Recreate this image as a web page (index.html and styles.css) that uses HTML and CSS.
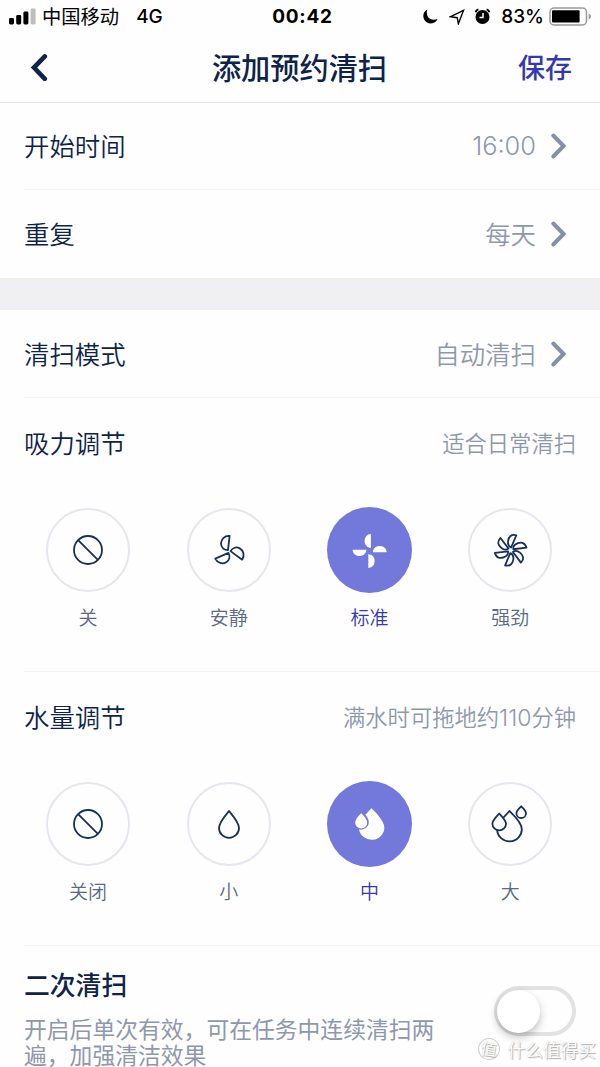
FILE: index.html
```html
<!DOCTYPE html>
<html lang="zh-CN">
<head>
    <meta charset="UTF-8">
    <meta name="viewport" content="width=device-width, initial-scale=1.0">
    <title>添加预约清扫</title>
    <link rel="stylesheet" href="styles.css">
</head>
<body>

    <div class="status-bar">
        <div class="status-left">
            <svg class="signal" width="27" height="17" viewBox="0 0 27 17">
                <rect x="0" y="10" width="5" height="6.5" rx="1.4"/>
                <rect x="7.2" y="7" width="5" height="9.5" rx="1.4"/>
                <rect x="14.4" y="3.5" width="5" height="13" rx="1.4"/>
                <rect class="off" x="21.6" y="0.5" width="5" height="16" rx="1.4"/>
            </svg>
            <span class="carrier">中国移动</span>
            <span class="network">4G</span>
        </div>
        <div class="clock">00:42</div>
        <div class="status-right">
            <svg width="15" height="15" viewBox="0 0 15 15">
                <path d="M4.3 .6C-1.2 3.4 -.6 10.6 3.6 13.2C7.8 15.8 13 14 14.6 10C10 11.8 6 10.2 4.6 7.2C3.6 5 3.6 2.6 4.3 .6Z"/>
            </svg>
            <svg class="location" width="16" height="16" viewBox="0 0 16 16">
                <path d="M1.2 7.8L14.5 1.4L9.4 14.7L8.2 8.7Z"/>
            </svg>
            <svg class="alarm" width="17" height="17" viewBox="0 0 17 17">
                <circle cx="8.5" cy="9" r="7"/>
                <path class="ear" d="M1.6 4.2Q2.2 2.1 4.4 1.4M15.4 4.2Q14.8 2.1 12.6 1.4"/>
                <path class="hand" d="M9 5V9.4H5.5"/>
            </svg>
            <span class="percent">83%</span>
            <svg class="battery" width="43" height="19" viewBox="0 0 43 19">
                <rect class="shell" x="1" y="1" width="36.5" height="17" rx="4"/>
                <rect x="3" y="3.2" width="27.6" height="12.4" rx="1"/>
                <path class="tip" d="M39.7 6.7Q42 7.3 42 9.5T39.7 12.3Z"/>
            </svg>
        </div>
    </div>

    <header class="nav">
        <a class="back">
            <svg width="18" height="28" viewBox="0 0 18 28"><path d="M14.8 3.4L4 14.6L14.8 25.8"/></svg>
        </a>
        <h1>添加预约清扫</h1>
        <a class="save">保存</a>
    </header>

    <div class="row line">
        <span class="label">开始时间</span>
        <span class="value time">16:00</span>
        <svg class="arrow" width="18" height="28" viewBox="0 0 18 28"><path d="M3.3 3.5L13.6 14L3.3 24.5"/></svg>
    </div>
    <div class="row">
        <span class="label">重复</span>
        <span class="value">每天</span>
        <svg class="arrow" width="18" height="28" viewBox="0 0 18 28"><path d="M3.3 3.5L13.6 14L3.3 24.5"/></svg>
    </div>

    <div class="gap"></div>

    <div class="row line">
        <span class="label">清扫模式</span>
        <span class="value">自动清扫</span>
        <svg class="arrow" width="18" height="28" viewBox="0 0 18 28"><path d="M3.3 3.5L13.6 14L3.3 24.5"/></svg>
    </div>

    <section class="panel line">
        <div class="panel-head">
            <span class="label">吸力调节</span>
            <span class="hint">适合日常清扫</span>
        </div>
        <div class="options">
            <div class="option">
                <div class="circle">
                    <svg width="40" height="40" viewBox="-20 -20 40 40"><circle r="14"/><path d="M-9.9 -9.9L9.9 9.9"/></svg>
                </div>
                <span>关</span>
            </div>
            <div class="option">
                <div class="circle">
                    <svg width="40" height="40" viewBox="-20 -20 40 40">
                        <defs><path id="blade3" d="M-1 -1.2L.6 -15.5C-4.6 -15.9 -8 -12 -8 -7.8C-8 -4 -5 -1.2 -1 -1.2Z"/></defs>
                        <g transform="translate(0 1.4)">
                            <use href="#blade3"/>
                            <use href="#blade3" transform="rotate(120)"/>
                            <use href="#blade3" transform="rotate(240)"/>
                        </g>
                    </svg>
                </div>
                <span>安静</span>
            </div>
            <div class="option selected">
                <div class="circle">
                    <svg width="40" height="40" viewBox="-20 -20 40 40">
                        <defs><path id="blade4" d="M1.3 -17V-3.3C-2.4 -3.3 -5 -6.2 -5 -10.1C-5 -14 -2.4 -17 1.3 -17Z"/></defs>
                        <g transform="translate(.6 1)">
                            <use href="#blade4"/>
                            <use href="#blade4" transform="rotate(90)"/>
                            <use href="#blade4" transform="rotate(180)"/>
                            <use href="#blade4" transform="rotate(270)"/>
                        </g>
                    </svg>
                </div>
                <span>标准</span>
            </div>
            <div class="option">
                <div class="circle">
                    <svg width="40" height="40" viewBox="-20 -20 40 40">
                        <defs><path id="blade6" d="M.4 -2.8L5.6 -15C.6 -16.4 -2 -13.5 -2.6 -9.2C-3 -6.2 -1.8 -3.6 .4 -2.8Z"/></defs>
                        <g transform="translate(.7 .3)">
                            <use href="#blade6"/>
                            <use href="#blade6" transform="rotate(60)"/>
                            <use href="#blade6" transform="rotate(120)"/>
                            <use href="#blade6" transform="rotate(180)"/>
                            <use href="#blade6" transform="rotate(240)"/>
                            <use href="#blade6" transform="rotate(300)"/>
                        </g>
                    </svg>
                </div>
                <span>强劲</span>
            </div>
        </div>
    </section>

    <section class="panel line">
        <div class="panel-head">
            <span class="label">水量调节</span>
            <span class="hint">满水时可拖地约<span class="minutes">110</span>分钟</span>
        </div>
        <div class="options">
            <div class="option">
                <div class="circle">
                    <svg width="40" height="40" viewBox="-20 -20 40 40"><circle r="14"/><path d="M-9.9 -9.9L9.9 9.9"/></svg>
                </div>
                <span>关闭</span>
            </div>
            <div class="option">
                <div class="circle">
                    <svg width="40" height="40" viewBox="-20 -20 40 40"><path d="M0 -13C-2.8 -9.6 -10 -1.6 -10 4A10 9.8 0 0 0 10 4C10 -1.6 2.8 -9.6 0 -13Z"/></svg>
                </div>
                <span>小</span>
            </div>
            <div class="option selected">
                <div class="circle">
                    <svg width="40" height="40" viewBox="-20 -20 40 40">
                        <path d="M2.5 -15.8C6 -12.4 15.4 -3.3 15.4 3.8A12.8 12.2 0 0 1 -10 5.6C-4 6.4 -.2 2.4 -.2 -2C-.2 -4.6 -1.8 -7.1 -3.6 -9.3Z"/>
                        <path d="M-7.8 -10.8C-6 -8.9 -1.8 -4.9 -1.8 -1.6A6 6 0 0 1 -13.8 -1.6C-13.8 -4.9 -9.6 -8.9 -7.8 -10.8Z"/>
                    </svg>
                </div>
                <span>中</span>
            </div>
            <div class="option">
                <div class="circle">
                    <svg width="40" height="40" viewBox="-20 -20 40 40">
                        <path d="M-6.6 -6.3L-.5 -13C3 -9.5 11.8 -1.6 11.8 5.2A12.3 11.8 0 0 1 -12.8 5.9"/>
                        <path d="M-10.8 -10.5C-8.8 -8.2 -4 -3.8 -4 -.2A6.8 6.6 0 0 1 -17.6 -.2C-17.6 -3.8 -12.8 -8.2 -10.8 -10.5Z"/>
                        <path d="M11.2 -17.8C12.5 -16.2 16 -13.5 16 -10.8A4.8 4.8 0 0 1 6.4 -10.8C6.4 -13.5 9.9 -16.2 11.2 -17.8Z"/>
                    </svg>
                </div>
                <span>大</span>
            </div>
        </div>
    </section>

    <section class="twice">
        <div class="twice-text">
            <h2>二次清扫</h2>
            <p>开启后单次有效，可在任务中连续清扫两遍，加强清洁效果</p>
        </div>
        <div class="switch"><div class="knob"></div></div>
        <div class="watermark"><span class="badge">值</span>什么值得买</div>
    </section>

</body>
</html>
```
FILE: styles.css
```css
* {
    box-sizing: border-box;
}
body {
    margin: 0;
    width: 600px;
    height: 1067px;
    overflow: hidden;
    background-color: #fefefe;
    color: #0d234a;
    font-family: "Noto Sans CJK SC", sans-serif;
}
h1, h2, p {
    margin: 0;
}
svg {
    display: block;
    flex: none;
}
.status-bar {
    display: grid;
    grid-template-columns: 1fr auto 1fr;
    align-items: center;
    height: 33px;
    padding: 0 8px 0 9px;
    color: #000;
}
.status-left, .status-right {
    display: flex;
    align-items: center;
}
.status-right {
    justify-content: flex-end;
}
.signal .off {
    fill: #bdbdbd;
}
.carrier {
    margin-left: 6px;
    padding-bottom: 2px;
    font-size: 19.3px;
    font-weight: 400;
    line-height: 30px;
}
.network {
    margin-left: 17px;
    font: 500 19px Inter, sans-serif;
}
.clock {
    padding-left: 4px;
    font: 700 19px Inter, sans-serif;
    letter-spacing: 0.7px;
}
.location {
    margin-left: 11px;
    fill: none;
    stroke: #000;
    stroke-width: 1.4;
}
.alarm {
    margin-left: 9px;
}
.alarm .ear, .alarm .hand {
    fill: none;
    stroke: #000;
    stroke-width: 2;
}
.alarm .hand {
    stroke: #fff;
    stroke-width: 1.5;
}
.percent {
    margin-left: 10px;
    font: 500 19px Inter, sans-serif;
}
.battery {
    margin-left: 5px;
}
.battery .shell {
    fill: none;
    stroke: #999;
    stroke-width: 1.5;
}
.battery .tip {
    fill: #999;
}
.nav {
    display: grid;
    grid-template-columns: 1fr auto 1fr;
    align-items: center;
    height: 70px;
    padding: 0 28px 2px 30px;
    border-bottom: 1px solid #e6e6e8;
}
.back path, .arrow path {
    fill: none;
    stroke: #0d234a;
    stroke-width: 4.6;
    stroke-linecap: round;
}
h1 {
    margin-left: -3px;
    padding-bottom: 2px;
    font-size: 29.2px;
    font-weight: 500;
    line-height: 38px;
}
.save {
    justify-self: end;
    color: #3439ae;
    font-size: 27px;
    font-weight: 500;
    line-height: 38px;
}
.row {
    display: flex;
    align-items: center;
    height: 88px;
    padding-right: 32px;
    margin-left: 24px;
}
.line {
    border-bottom: 1px solid #f4f4f6;
}
.nav + .row {
    height: 87px;
}
.label {
    flex: 1;
    padding-bottom: 2px;
    font-size: 25.4px;
    font-weight: 350;
    line-height: 36px;
}
.value {
    padding-bottom: 2px;
    color: #8e98ad;
    font-size: 25.4px;
    font-weight: 350;
    line-height: 36px;
}
.time {
    padding-bottom: 0;
    font-family: Inter, sans-serif;
}
.arrow {
    margin-left: 14px;
}
.arrow path {
    stroke: #8590a8;
    stroke-width: 4;
}
.gap {
    height: 32px;
    background-color: #f0f0f2;
}
.panel {
    height: 274px;
    margin-left: 24px;
}
.panel-head {
    display: flex;
    align-items: center;
    height: 90px;
    padding-right: 24px;
}
.hint {
    padding-bottom: 2px;
    color: #8e98ad;
    font-size: 22.3px;
    font-weight: 350;
}
.minutes {
    font-family: Inter, sans-serif;
    font-size: 23px;
    letter-spacing: 0;
}
.options {
    display: grid;
    grid-template-columns: repeat(4, 140.8px);
    margin-left: -6.5px;
    padding-top: 19px;
}
.option {
    display: flex;
    flex-direction: column;
    align-items: center;
    color: #5a6984;
    font-size: 19px;
    font-weight: 350;
    line-height: 28px;
}
.circle {
    display: flex;
    align-items: center;
    justify-content: center;
    width: 85px;
    height: 86px;
    margin-bottom: 10px;
}
.circle svg {
    fill: none;
    stroke: #17305a;
    stroke-width: 1.8;
    stroke-linejoin: round;
}
.option:not(.selected) .circle {
    width: 84px;
    height: 84px;
    margin: 1px 0 11px;
    border: 2px solid #e4e7ed;
    border-radius: 50%;
}
.selected {
    color: #3439ae;
}
.selected .circle {
    border-radius: 50%;
    background-color: #7279db;
}
.selected svg {
    fill: #fff;
    stroke: none;
}
.twice {
    position: relative;
    display: flex;
    justify-content: space-between;
    height: 122px;
    padding: 18px 24px 0;
}
.twice-text {
    width: 416px;
}
h2 {
    font-size: 25.8px;
    font-weight: 500;
    line-height: 40px;
}
.twice p {
    margin-top: 12px;
    color: #8e98ad;
    font-size: 22.8px;
    line-height: 26px;
}
.switch {
    width: 82px;
    height: 50px;
    margin-top: 22px;
    border: 4px solid #e2e2e2;
    border-radius: 25px;
}
.knob {
    width: 43px;
    height: 43px;
    margin-left: -1px;
    border-radius: 50%;
    background-color: #fff;
    box-shadow: 0 4px 9px rgba(0, 0, 0, 0.25);
}
.watermark {
    position: absolute;
    right: 4px;
    top: 90px;
    display: flex;
    align-items: center;
    gap: 8px;
    color: #fff;
    font-size: 17.7px;
    font-weight: 350;
    line-height: 26px;
    text-shadow: 1px 1px 1px #aaa, 0 0 1px #bbb;
}
.badge {
    width: 22px;
    height: 22px;
    border: 1px solid #d0d0d0;
    border-radius: 50%;
    font-size: 16px;
    line-height: 19px;
    text-align: center;
    transform: rotate(8deg);
}
```
